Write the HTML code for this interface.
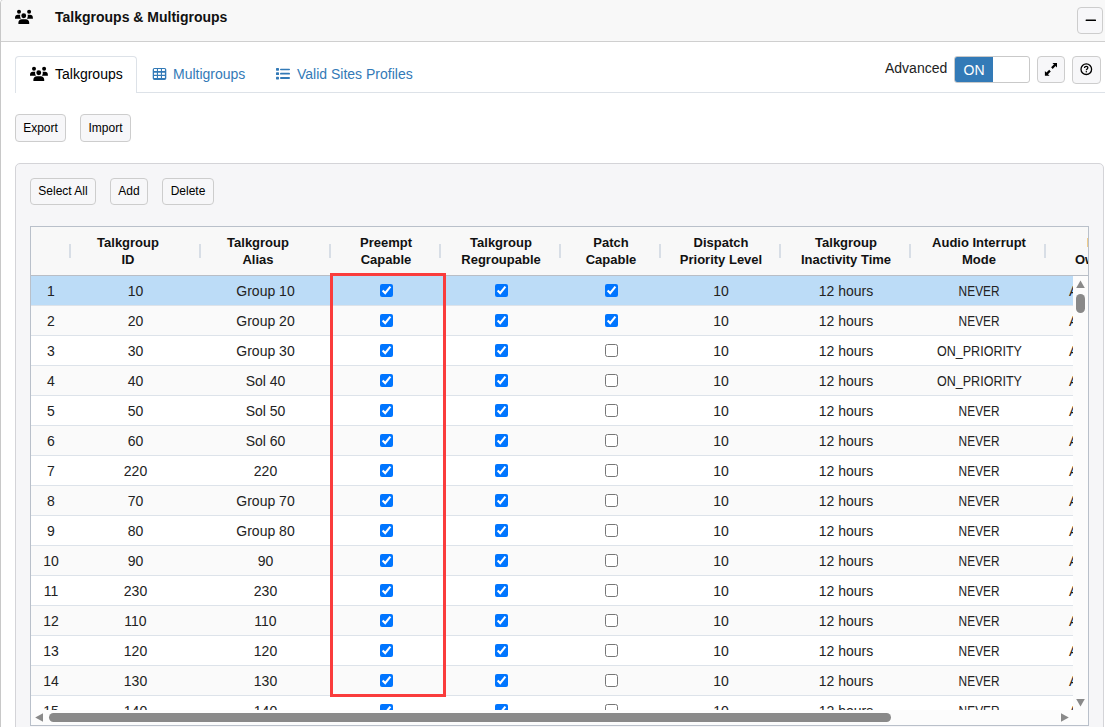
<!DOCTYPE html>
<html><head><meta charset="utf-8">
<style>
*{box-sizing:border-box;margin:0;padding:0}
html,body{width:1105px;height:727px;overflow:hidden;background:#fff;font-family:"Liberation Sans",sans-serif;color:#000}
.abs{position:absolute}
#panel{position:absolute;left:0;top:-1px;width:1120px;height:740px;border:1px solid #c8c8c8;border-radius:4px;background:#fff}
#hdr{position:absolute;left:1px;top:0;width:1120px;height:42px;border-top-left-radius:3px;background:#f8f8f8;border-bottom:1px solid #cfcfcf}
.title{position:absolute;left:55px;top:9px;font-size:14px;font-weight:bold;color:#111}
.btn{position:absolute;border:1px solid #cdcdcd;border-radius:4px;background:#f7f7f9;font-size:13px;color:#000;text-align:center}
.tabline{position:absolute;left:15px;top:92px;width:1090px;height:1px;background:#dde2e8}
.tab{position:absolute;font-size:14px;color:#337ab7}
.gh{position:absolute;left:0;top:0;width:1100px;height:49px;background:#f8f8f8;border-bottom:1px solid #b9bec6}
.sep{position:absolute;top:17px;width:2px;height:14px;background:#d8dee6}
.ht{position:absolute;top:7px;width:150px;text-align:center;font-size:13px;font-weight:bold;line-height:17px;color:#111;white-space:nowrap}
.ht2{position:absolute;font-size:13px;font-weight:bold;line-height:17px;color:#111;white-space:nowrap}
.body{position:absolute;left:0;top:49px;width:1042px;height:434px;overflow:hidden}
.row{position:absolute;left:0;width:1042px;height:30px;background:#fff;border-bottom:1px solid #dde3ea}
.row.alt{background:#fafafa}
.row.sel{background:#bcdcf7}
.c{position:absolute;top:1px;width:120px;text-align:center;font-size:14px;line-height:29px;color:#222;white-space:nowrap}
.cb{position:absolute;top:8px;margin:0;width:13px;height:13px}
.tab.active{left:15px;top:56px;width:122px;height:37px;border:1px solid #dde2e8;border-bottom:none;border-radius:4px 4px 0 0;background:#fff;color:#000}
</style></head><body>
<div id="panel"></div>
<div id="hdr"></div>
<svg class="abs" style="left:14px;top:9px" width="20" height="16" viewBox="0 0 20 16"><path fill="#000" d="M3,2.8a2,2 0 1,0 4,0a2,2 0 1,0 -4,0z M13.1,2.8a2,2 0 1,0 4,0a2,2 0 1,0 -4,0z M7.3,6.7a2.45,2.45 0 1,0 4.9,0a2.45,2.45 0 1,0 -4.9,0z M1,9.7 L1,8.9 C1,7 2.1,5.8 3.9,5.8 L6.3,5.8 C5.8,7.2 6.2,8.6 6.9,9.7z M18.9,9.7 L18.9,8.9 C18.9,7 17.8,5.8 16,5.8 L13.6,5.8 C14.1,7.2 13.7,8.6 13,9.7z M4.4,14.9 L4.4,13.6 C4.4,11.6 5.8,10.2 7.8,10.2 L11.8,10.2 C13.8,10.2 15.2,11.6 15.2,13.6 L15.2,14.9z"/></svg>
<div class="title">Talkgroups &amp; Multigroups</div>
<div class="btn" style="left:1077px;top:7px;width:26px;height:27px"><svg class="abs" style="left:0;top:0" width="25" height="25" viewBox="0 0 25 25"><rect x="7.6" y="11.6" width="10.4" height="1.4" rx="0.5" fill="#000"/></svg></div>

<div class="tabline"></div>
<div class="tab active"></div>
<svg class="abs" style="left:29px;top:66px" width="20" height="16" viewBox="0 0 20 16"><path fill="#000" d="M3,2.8a2,2 0 1,0 4,0a2,2 0 1,0 -4,0z M13.1,2.8a2,2 0 1,0 4,0a2,2 0 1,0 -4,0z M7.3,6.7a2.45,2.45 0 1,0 4.9,0a2.45,2.45 0 1,0 -4.9,0z M1,9.7 L1,8.9 C1,7 2.1,5.8 3.9,5.8 L6.3,5.8 C5.8,7.2 6.2,8.6 6.9,9.7z M18.9,9.7 L18.9,8.9 C18.9,7 17.8,5.8 16,5.8 L13.6,5.8 C14.1,7.2 13.7,8.6 13,9.7z M4.4,14.9 L4.4,13.6 C4.4,11.6 5.8,10.2 7.8,10.2 L11.8,10.2 C13.8,10.2 15.2,11.6 15.2,13.6 L15.2,14.9z"/></svg>
<div class="tab" style="left:55px;top:66px;color:#000">Talkgroups</div>
<svg class="abs" style="left:152px;top:67px" width="15" height="14" viewBox="0 0 15 14"><path fill="#337ab7" fill-rule="evenodd" d="M2.5,1h10a1.8,1.8 0 0 1 1.8,1.8v8.4a1.8,1.8 0 0 1 -1.8,1.8h-10a1.8,1.8 0 0 1 -1.8,-1.8v-8.4a1.8,1.8 0 0 1 1.8,-1.8z M2,2.1h2.9v1.9h-2.9z M6,2.1h2.9v1.9h-2.9z M10,2.1h2.9v1.9h-2.9z M2,5.8h2.9v1.9h-2.9z M6,5.8h2.9v1.9h-2.9z M10,5.8h2.9v1.9h-2.9z M2,9.1h2.9v1.9h-2.9z M6,9.1h2.9v1.9h-2.9z M10,9.1h2.9v1.9h-2.9z"/></svg>
<svg class="abs" style="left:275px;top:67px" width="16" height="14" viewBox="0 0 16 14"><g fill="#337ab7"><rect x="1" y="1" width="3" height="2.7" rx="0.6"/><rect x="1" y="5.3" width="3" height="2.7" rx="0.6"/><rect x="1" y="9.7" width="3" height="2.7" rx="0.6"/><rect x="5" y="1.7" width="10" height="1.6" rx="0.8"/><rect x="5" y="5.8" width="10" height="1.8" rx="0.9"/><rect x="5" y="10" width="10" height="1.9" rx="0.9"/></g></svg>
<div class="tab" style="left:173px;top:66px">Multigroups</div>
<div class="tab" style="left:297px;top:66px">Valid Sites Profiles</div>

<div class="abs" style="left:885px;top:60px;font-size:14px;color:#222">Advanced</div>
<div class="abs" style="left:954px;top:56px;width:76px;height:27px;border:1px solid #c9c9c9;border-radius:3px;background:#fff;overflow:hidden">
  <div class="abs" style="left:0;top:0;width:38px;height:25px;background:#337ab7;color:#fff;font-size:14px;text-align:center;line-height:27px">ON</div>
</div>
<div class="btn" style="left:1037px;top:56px;width:28px;height:27px"><svg class="abs" style="left:6px;top:5px" width="16" height="16" viewBox="0 0 16 16"><path fill="#000" d="M8.4,1 L13,1 L13,5.6z M0.9,8.9 L0.9,13.7 L5.5,13.7z"/><path d="M11.2,2.8 L7.9,6.1 M2.7,11.9 L6,8.6" stroke="#000" stroke-width="2.2" fill="none"/></svg></div>
<div class="btn" style="left:1072px;top:56px;width:29px;height:28px"><svg class="abs" style="left:5px;top:5px" width="16" height="16" viewBox="0 0 16 16"><circle cx="8.3" cy="7.2" r="5.3" fill="none" stroke="#000" stroke-width="1.3"/><path d="M6.5,5.9 C6.5,4.9 7.3,4.3 8.2,4.3 C9.2,4.3 9.9,4.9 9.9,5.8 C9.9,6.9 8.3,7.0 8.3,8.3" fill="none" stroke="#000" stroke-width="1.3"/><circle cx="8.3" cy="9.7" r="0.75" fill="#000"/></svg></div>

<div class="btn" style="left:15px;top:114px;width:51px;height:28px;line-height:26px;font-size:12px">Export</div>
<div class="btn" style="left:80px;top:114px;width:51px;height:28px;line-height:26px;font-size:12px">Import</div>

<div class="abs" style="left:15px;top:163px;width:1089px;height:600px;border:1px solid #d4d4d8;border-radius:5px;background:#f6f6f8"></div>
<div class="btn" style="left:30px;top:178px;width:66px;height:27px;line-height:25px;font-size:12px">Select All</div>
<div class="btn" style="left:110px;top:178px;width:38px;height:27px;line-height:25px;font-size:12px">Add</div>
<div class="btn" style="left:162px;top:178px;width:52px;height:27px;line-height:25px;font-size:12px">Delete</div>

<div id="grid" class="abs" style="left:30px;top:226px;width:1059px;height:500px;border:1px solid #b9c0ca;background:#fff;overflow:hidden">
<!--GRID-->
<div class="gh"></div>
<div class="sep" style="left:38px"></div>
<div class="sep" style="left:168px"></div>
<div class="sep" style="left:298px"></div>
<div class="sep" style="left:408px"></div>
<div class="sep" style="left:528px"></div>
<div class="sep" style="left:628px"></div>
<div class="sep" style="left:748px"></div>
<div class="sep" style="left:878px"></div>
<div class="sep" style="left:1013px"></div>
<div class="ht" style="left:22px">Talkgroup<br>ID</div>
<div class="ht" style="left:152px">Talkgroup<br>Alias</div>
<div class="ht" style="left:280px">Preempt<br>Capable</div>
<div class="ht" style="left:395px">Talkgroup<br>Regroupable</div>
<div class="ht" style="left:505px">Patch<br>Capable</div>
<div class="ht" style="left:615px">Dispatch<br>Priority Level</div>
<div class="ht" style="left:740px">Talkgroup<br>Inactivity Time</div>
<div class="ht" style="left:873px">Audio Interrupt<br>Mode</div>
<div class="ht2" style="left:1056px;top:7px">B</div><div class="ht2" style="left:1044px;top:24px">Owner</div>
<div class="body">
<div class="row sel" style="top:0px">
<span class="c" style="left:-40px">1</span>
<span class="c" style="left:44.5px">10</span>
<span class="c" style="left:174.5px">Group 10</span>
<input type="checkbox" class="cb" style="left:349.0px" checked>
<input type="checkbox" class="cb" style="left:464.0px" checked>
<input type="checkbox" class="cb" style="left:574.0px" checked>
<span class="c" style="left:630px">10</span>
<span class="c" style="left:755px">12 hours</span>
<span class="c" style="left:888px"><span style="display:inline-block;transform:scaleX(0.85)">NEVER</span></span>
<span class="c" style="left:1038px;text-align:left">A</span>
</div>
<div class="row alt" style="top:30px">
<span class="c" style="left:-40px">2</span>
<span class="c" style="left:44.5px">20</span>
<span class="c" style="left:174.5px">Group 20</span>
<input type="checkbox" class="cb" style="left:349.0px" checked>
<input type="checkbox" class="cb" style="left:464.0px" checked>
<input type="checkbox" class="cb" style="left:574.0px" checked>
<span class="c" style="left:630px">10</span>
<span class="c" style="left:755px">12 hours</span>
<span class="c" style="left:888px"><span style="display:inline-block;transform:scaleX(0.85)">NEVER</span></span>
<span class="c" style="left:1038px;text-align:left">A</span>
</div>
<div class="row" style="top:60px">
<span class="c" style="left:-40px">3</span>
<span class="c" style="left:44.5px">30</span>
<span class="c" style="left:174.5px">Group 30</span>
<input type="checkbox" class="cb" style="left:349.0px" checked>
<input type="checkbox" class="cb" style="left:464.0px" checked>
<input type="checkbox" class="cb" style="left:574.0px">
<span class="c" style="left:630px">10</span>
<span class="c" style="left:755px">12 hours</span>
<span class="c" style="left:888px"><span style="display:inline-block;transform:scaleX(0.895)">ON_PRIORITY</span></span>
<span class="c" style="left:1038px;text-align:left">A</span>
</div>
<div class="row alt" style="top:90px">
<span class="c" style="left:-40px">4</span>
<span class="c" style="left:44.5px">40</span>
<span class="c" style="left:174.5px">Sol 40</span>
<input type="checkbox" class="cb" style="left:349.0px" checked>
<input type="checkbox" class="cb" style="left:464.0px" checked>
<input type="checkbox" class="cb" style="left:574.0px">
<span class="c" style="left:630px">10</span>
<span class="c" style="left:755px">12 hours</span>
<span class="c" style="left:888px"><span style="display:inline-block;transform:scaleX(0.895)">ON_PRIORITY</span></span>
<span class="c" style="left:1038px;text-align:left">A</span>
</div>
<div class="row" style="top:120px">
<span class="c" style="left:-40px">5</span>
<span class="c" style="left:44.5px">50</span>
<span class="c" style="left:174.5px">Sol 50</span>
<input type="checkbox" class="cb" style="left:349.0px" checked>
<input type="checkbox" class="cb" style="left:464.0px" checked>
<input type="checkbox" class="cb" style="left:574.0px">
<span class="c" style="left:630px">10</span>
<span class="c" style="left:755px">12 hours</span>
<span class="c" style="left:888px"><span style="display:inline-block;transform:scaleX(0.85)">NEVER</span></span>
<span class="c" style="left:1038px;text-align:left">A</span>
</div>
<div class="row alt" style="top:150px">
<span class="c" style="left:-40px">6</span>
<span class="c" style="left:44.5px">60</span>
<span class="c" style="left:174.5px">Sol 60</span>
<input type="checkbox" class="cb" style="left:349.0px" checked>
<input type="checkbox" class="cb" style="left:464.0px" checked>
<input type="checkbox" class="cb" style="left:574.0px">
<span class="c" style="left:630px">10</span>
<span class="c" style="left:755px">12 hours</span>
<span class="c" style="left:888px"><span style="display:inline-block;transform:scaleX(0.85)">NEVER</span></span>
<span class="c" style="left:1038px;text-align:left">A</span>
</div>
<div class="row" style="top:180px">
<span class="c" style="left:-40px">7</span>
<span class="c" style="left:44.5px">220</span>
<span class="c" style="left:174.5px">220</span>
<input type="checkbox" class="cb" style="left:349.0px" checked>
<input type="checkbox" class="cb" style="left:464.0px" checked>
<input type="checkbox" class="cb" style="left:574.0px">
<span class="c" style="left:630px">10</span>
<span class="c" style="left:755px">12 hours</span>
<span class="c" style="left:888px"><span style="display:inline-block;transform:scaleX(0.85)">NEVER</span></span>
<span class="c" style="left:1038px;text-align:left">A</span>
</div>
<div class="row alt" style="top:210px">
<span class="c" style="left:-40px">8</span>
<span class="c" style="left:44.5px">70</span>
<span class="c" style="left:174.5px">Group 70</span>
<input type="checkbox" class="cb" style="left:349.0px" checked>
<input type="checkbox" class="cb" style="left:464.0px" checked>
<input type="checkbox" class="cb" style="left:574.0px">
<span class="c" style="left:630px">10</span>
<span class="c" style="left:755px">12 hours</span>
<span class="c" style="left:888px"><span style="display:inline-block;transform:scaleX(0.85)">NEVER</span></span>
<span class="c" style="left:1038px;text-align:left">A</span>
</div>
<div class="row" style="top:240px">
<span class="c" style="left:-40px">9</span>
<span class="c" style="left:44.5px">80</span>
<span class="c" style="left:174.5px">Group 80</span>
<input type="checkbox" class="cb" style="left:349.0px" checked>
<input type="checkbox" class="cb" style="left:464.0px" checked>
<input type="checkbox" class="cb" style="left:574.0px">
<span class="c" style="left:630px">10</span>
<span class="c" style="left:755px">12 hours</span>
<span class="c" style="left:888px"><span style="display:inline-block;transform:scaleX(0.85)">NEVER</span></span>
<span class="c" style="left:1038px;text-align:left">A</span>
</div>
<div class="row alt" style="top:270px">
<span class="c" style="left:-40px">10</span>
<span class="c" style="left:44.5px">90</span>
<span class="c" style="left:174.5px">90</span>
<input type="checkbox" class="cb" style="left:349.0px" checked>
<input type="checkbox" class="cb" style="left:464.0px" checked>
<input type="checkbox" class="cb" style="left:574.0px">
<span class="c" style="left:630px">10</span>
<span class="c" style="left:755px">12 hours</span>
<span class="c" style="left:888px"><span style="display:inline-block;transform:scaleX(0.85)">NEVER</span></span>
<span class="c" style="left:1038px;text-align:left">A</span>
</div>
<div class="row" style="top:300px">
<span class="c" style="left:-40px">11</span>
<span class="c" style="left:44.5px">230</span>
<span class="c" style="left:174.5px">230</span>
<input type="checkbox" class="cb" style="left:349.0px" checked>
<input type="checkbox" class="cb" style="left:464.0px" checked>
<input type="checkbox" class="cb" style="left:574.0px">
<span class="c" style="left:630px">10</span>
<span class="c" style="left:755px">12 hours</span>
<span class="c" style="left:888px"><span style="display:inline-block;transform:scaleX(0.85)">NEVER</span></span>
<span class="c" style="left:1038px;text-align:left">A</span>
</div>
<div class="row alt" style="top:330px">
<span class="c" style="left:-40px">12</span>
<span class="c" style="left:44.5px">110</span>
<span class="c" style="left:174.5px">110</span>
<input type="checkbox" class="cb" style="left:349.0px" checked>
<input type="checkbox" class="cb" style="left:464.0px" checked>
<input type="checkbox" class="cb" style="left:574.0px">
<span class="c" style="left:630px">10</span>
<span class="c" style="left:755px">12 hours</span>
<span class="c" style="left:888px"><span style="display:inline-block;transform:scaleX(0.85)">NEVER</span></span>
<span class="c" style="left:1038px;text-align:left">A</span>
</div>
<div class="row" style="top:360px">
<span class="c" style="left:-40px">13</span>
<span class="c" style="left:44.5px">120</span>
<span class="c" style="left:174.5px">120</span>
<input type="checkbox" class="cb" style="left:349.0px" checked>
<input type="checkbox" class="cb" style="left:464.0px" checked>
<input type="checkbox" class="cb" style="left:574.0px">
<span class="c" style="left:630px">10</span>
<span class="c" style="left:755px">12 hours</span>
<span class="c" style="left:888px"><span style="display:inline-block;transform:scaleX(0.85)">NEVER</span></span>
<span class="c" style="left:1038px;text-align:left">A</span>
</div>
<div class="row alt" style="top:390px">
<span class="c" style="left:-40px">14</span>
<span class="c" style="left:44.5px">130</span>
<span class="c" style="left:174.5px">130</span>
<input type="checkbox" class="cb" style="left:349.0px" checked>
<input type="checkbox" class="cb" style="left:464.0px" checked>
<input type="checkbox" class="cb" style="left:574.0px">
<span class="c" style="left:630px">10</span>
<span class="c" style="left:755px">12 hours</span>
<span class="c" style="left:888px"><span style="display:inline-block;transform:scaleX(0.85)">NEVER</span></span>
<span class="c" style="left:1038px;text-align:left">A</span>
</div>
<div class="row" style="top:420px">
<span class="c" style="left:-40px">15</span>
<span class="c" style="left:44.5px">140</span>
<span class="c" style="left:174.5px">140</span>
<input type="checkbox" class="cb" style="left:349.0px" checked>
<input type="checkbox" class="cb" style="left:464.0px" checked>
<input type="checkbox" class="cb" style="left:574.0px">
<span class="c" style="left:630px">10</span>
<span class="c" style="left:755px">12 hours</span>
<span class="c" style="left:888px"><span style="display:inline-block;transform:scaleX(0.85)">NEVER</span></span>
<span class="c" style="left:1038px;text-align:left">A</span>
</div>
</div>
<div class="abs" style="left:0px;top:483px;width:1042px;height:15px;background:#fcfcfc"></div>
<div class="abs" style="left:1042px;top:49px;width:15px;height:449px;background:#fcfcfc"></div>
<div class="abs" style="left:18px;top:486px;width:842px;height:9px;background:#898989;border-radius:4.5px"></div>
<div class="abs" style="left:1045px;top:67px;width:9px;height:19px;background:#898989;border-radius:4.5px"></div>
<svg class="abs" style="left:4px;top:486px;width:9px;height:9px" viewBox="0 0 9 9"><path d="M8,0.2 L8,8.8 L0.2,4.5z" fill="#898989"/></svg>
<svg class="abs" style="left:1029px;top:486px;width:9px;height:9px" viewBox="0 0 9 9"><path d="M1,0.2 L1,8.8 L8.8,4.5z" fill="#898989"/></svg>
<svg class="abs" style="left:1045px;top:53px;width:9px;height:9px" viewBox="0 0 9 9"><path d="M0.2,8 L8.8,8 L4.5,0.6z" fill="#898989"/></svg>
<svg class="abs" style="left:1045px;top:471px;width:9px;height:9px" viewBox="0 0 9 9"><path d="M0.2,1 L8.8,1 L4.5,8.4z" fill="#898989"/></svg>
<!--/GRID-->
</div>
<div class="abs" style="left:330px;top:273px;width:116px;height:424px;border:3px solid #fa3c3c"></div>
</body></html>
